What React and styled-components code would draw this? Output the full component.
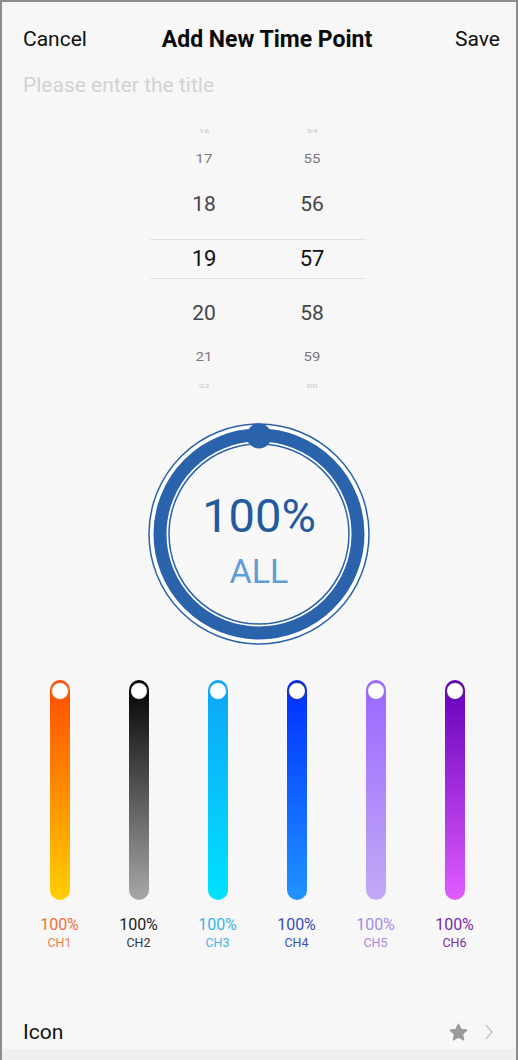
import React from 'react'
import styled, { createGlobalStyle } from 'styled-components'

const GlobalStyle = createGlobalStyle`
  html, body {
    margin: 0;
    padding: 0;
    background: #f7f7f7;
  }
  * { box-sizing: border-box; }
`

const Frame = styled.div`
  width: 518px;
  height: 1060px;
  overflow: hidden;
  border: 2px solid #8d8d8d;
  border-bottom: none;
  background: #f7f7f7;
  font-family: Roboto, "Noto Sans", sans-serif;
  display: flex;
  flex-direction: column;
`

const Header = styled.div`
  height: 74px;
  padding: 0 16px 0 21px;
  display: flex;
  align-items: center;
  justify-content: space-between;
  font-size: 21px;
  color: #111;
`

const Title = styled.div`
  font-weight: 700;
  font-size: 23px;
  color: #0a0a0a;
  margin-right: 8px;
`

const TitleInput = styled.div`
  height: 18px;
  line-height: 18px;
  padding-left: 21px;
  font-size: 21px;
  color: #d2d2d2;
`

const Picker = styled.div`
  margin: 24px 0 0 148px;
  width: 216px;
  display: flex;
  flex-direction: column;
`

const PickerRow = styled.div`
  height: ${p => p.$h}px;
  padding: ${p => p.$pad || '0'};
  display: grid;
  grid-template-columns: 1fr 1fr;
  align-items: center;
  ${p => p.$selected && `
    border-top: 1px solid #e2e2e2;
    border-bottom: 1px solid #e2e2e2;
  `}
`

const PickerCell = styled.div`
  text-align: center;
  font-size: ${p => p.$size}px;
  line-height: 1;
  color: ${p => p.$color};
  transform: scaleY(${p => p.$squash || 1});
`

const Gauge = styled.div`
  position: relative;
  margin: 20px auto 0;
  width: 224px;
  height: 224px;
  display: flex;
  flex-direction: column;
  align-items: center;
  padding-top: 70px;
`

const GaugeRing = styled.svg`
  position: absolute;
  left: 0;
  top: 0;
`

const GaugeValue = styled.div`
  position: relative;
  font-size: 47px;
  line-height: 48px;
  color: #23599d;
`

const GaugeLabel = styled.div`
  position: relative;
  margin-top: 14px;
  font-size: 34px;
  line-height: 34px;
  color: #5e9dd6;
`

const Channels = styled.div`
  margin-top: 34px;
  padding-left: 18px;
  display: grid;
  grid-template-columns: repeat(6, 79px);
`

const Channel = styled.div`
  display: flex;
  flex-direction: column;
  align-items: center;
`

const Track = styled.div`
  position: relative;
  width: 20px;
  height: 220px;
  border-radius: 10px;
  background: linear-gradient(to bottom, ${p => p.$from}, ${p => p.$to});
`

const Thumb = styled.div`
  position: absolute;
  left: 1px;
  top: 2px;
  width: 18px;
  height: 18px;
  border-radius: 50%;
  background: #fff;
  border: 1.5px solid ${p => p.$ring};
`

const Percent = styled.div`
  margin-top: 15px;
  font-size: 16px;
  line-height: 20px;
  color: ${p => p.$color};
`

const ChannelName = styled.div`
  margin-top: 0;
  font-size: 12.5px;
  line-height: 16px;
  color: ${p => p.$color};
`

const IconRow = styled.div`
  margin-top: 64px;
  height: 34px;
  padding: 0 22px 0 21px;
  display: flex;
  align-items: center;
  font-size: 21px;
  color: #111;
`

const IconLabel = styled.div`
  flex: 1;
`

const IconSide = styled.div`
  display: flex;
  align-items: center;
  gap: 15px;
`

const BottomBand = styled.div`
  flex: 1;
  background: #efefef;
`

const pickerRows = [
  { h: 26, size: 10, color: '#c8c8c8', squash: 0.5, vals: ['16', '54'] },
  { h: 30, size: 15, color: '#7a7a7a', squash: 0.85, vals: ['17', '55'] },
  { h: 65, pad: '0 0 5px 0', size: 21, color: '#444', vals: ['18', '56'] },
  { h: 40, size: 22, color: '#111', selected: true, vals: ['19', '57'] },
  { h: 65, pad: '4px 0 0 0', size: 21, color: '#444', vals: ['20', '58'] },
  { h: 26, size: 15, color: '#7a7a7a', squash: 0.85, vals: ['21', '59'] },
  { h: 32, size: 10, color: '#c8c8c8', squash: 0.5, vals: ['22', '00'] },
]

const channels = [
  { name: 'CH1', from: '#ff4a00', to: '#ffcf00', ring: '#e86a2a', text: '#f0703a', sub: '#ee8046' },
  { name: 'CH2', from: '#000000', to: '#a8a8a8', ring: '#111', text: '#222', sub: '#333' },
  { name: 'CH3', from: '#0ea4f6', to: '#00e2ff', ring: '#2aa8ea', text: '#3cb4e6', sub: '#44b6e6' },
  { name: 'CH4', from: '#002cff', to: '#1f94ff', ring: '#1a2a80', text: '#3a4db4', sub: '#3a4db4' },
  { name: 'CH5', from: '#9a66ff', to: '#c2aaf6', ring: '#8f6ee6', text: '#a88ae2', sub: '#a88ae2' },
  { name: 'CH6', from: '#6400b8', to: '#e05cff', ring: '#4a1880', text: '#7a2aa8', sub: '#7a2aa8' },
]

function StarIcon() {
  return (
    <svg width="21" height="21" viewBox="0 0 24 24">
      <path
        d="M12 2.2l2.95 6.2 6.8.85-5 4.7 1.28 6.75L12 17.4l-6.03 3.3 1.28-6.75-5-4.7 6.8-.85z"
        fill="#9b9b9b"
        stroke="#9b9b9b"
        strokeWidth="1.2"
        strokeLinejoin="round"
      />
    </svg>
  )
}

function Chevron() {
  return (
    <svg width="10" height="18" viewBox="0 0 10 18">
      <path d="M2 2l6 7-6 7" fill="none" stroke="#c6c6c6" strokeWidth="1.6" />
    </svg>
  )
}

export default function App() {
  return (
    <Frame>
      <GlobalStyle />
      <Header>
        <span>Cancel</span>
        <Title>Add New Time Point</Title>
        <span>Save</span>
      </Header>
      <TitleInput>Please enter the title</TitleInput>

      <Picker>
        {pickerRows.map((r, i) => (
          <PickerRow key={i} $h={r.h} $pad={r.pad} $selected={r.selected}>
            {r.vals.map(v => (
              <PickerCell key={v} $size={r.size} $color={r.color} $squash={r.squash}>
                {v}
              </PickerCell>
            ))}
          </PickerRow>
        ))}
      </Picker>

      <Gauge>
        <GaugeRing width="224" height="224" viewBox="0 0 224 224">
          <circle cx="112" cy="112" r="110" fill="#fff" stroke="#2a62ab" strokeWidth="1.5" />
          <circle cx="112" cy="112" r="99" fill="none" stroke="#2a62ab" strokeWidth="13" />
          <circle cx="112" cy="112" r="90" fill="#f8f8f8" stroke="#2a62ab" strokeWidth="1.5" />
          <circle cx="112" cy="14" r="12.5" fill="#2a62ab" />
        </GaugeRing>
        <GaugeValue>100%</GaugeValue>
        <GaugeLabel>ALL</GaugeLabel>
      </Gauge>

      <Channels>
        {channels.map(c => (
          <Channel key={c.name}>
            <Track $from={c.from} $to={c.to}>
              <Thumb $ring={c.ring} />
            </Track>
            <Percent $color={c.text}>100%</Percent>
            <ChannelName $color={c.sub}>{c.name}</ChannelName>
          </Channel>
        ))}
      </Channels>

      <IconRow>
        <IconLabel>Icon</IconLabel>
        <IconSide>
          <StarIcon />
          <Chevron />
        </IconSide>
      </IconRow>
      <BottomBand />
    </Frame>
  )
}
